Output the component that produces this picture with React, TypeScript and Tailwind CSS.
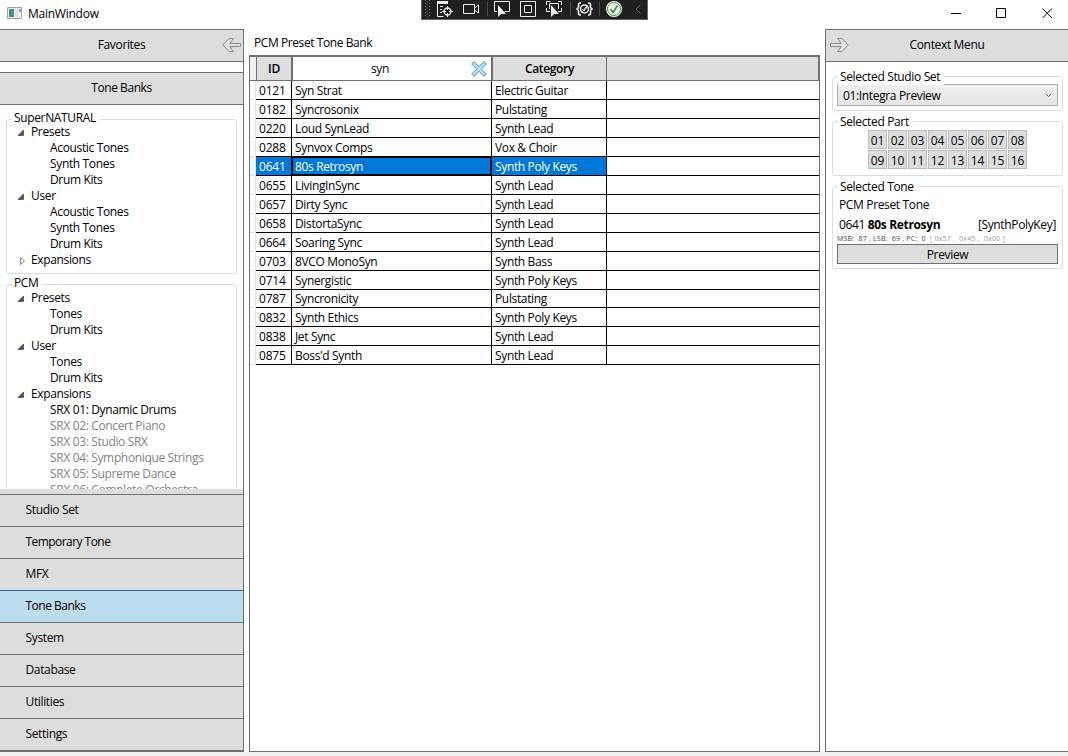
import React from "react";

const tx = "whitespace-pre leading-4";

function ArrowIcon({ flip }: { flip?: boolean }) {
  return (
    <svg width="19" height="14" viewBox="0 0 19 14" className={flip ? "-scale-x-100" : ""} fill="#e2e2e2" stroke="#8a8a8a" strokeWidth="1">
      <path d="M.7 7 7 .6h4.300L7.800 5.500h10.700v3H7.800l3.500 4.900H7z" />
    </svg>
  );
}

function GroupBox({ title, className, low, children }: { title: string; className: string; low?: boolean; children: React.ReactNode }) {
  return (
    <div className={"relative rounded-[3px] border border-[#d5dfe5] " + className}>
      <div className={"absolute left-[5px] bg-white pl-0.5 pr-1 " + tx + (low ? " -top-[8px]" : " -top-[10px]")}>{title}</div>
      {children}
    </div>
  );
}

function Branch({ title, closed }: { title: string; closed?: boolean }) {
  return (
    <div className="flex h-4 items-center">
      <svg width="10" height="10" viewBox="0 0 10 10" className="ml-[10px] mr-[4px] mt-px shrink-0">
        {closed ? <path d="M3.500 1.500v7L7.500 5z" fill="#fff" stroke="#8a8a8a" /> : <path d="M6.500 2v5.500H1z" fill="#595959" stroke="#404040" strokeWidth=".7" />}
      </svg>
      <span className={tx}>{title}</span>
    </div>
  );
}

function Leaf({ title, dim }: { title: string; dim?: boolean }) {
  return <div className={"h-4 pl-[43px] " + tx + (dim ? " text-[#838383]" : "")}>{title}</div>;
}

const rows = [
  ["0121", "Syn Strat", "Electric Guitar"],
  ["0182", "Syncrosonix", "Pulstating"],
  ["0220", "Loud SynLead", "Synth Lead"],
  ["0288", "Synvox Comps", "Vox & Choir"],
  ["0641", "80s Retrosyn", "Synth Poly Keys"],
  ["0655", "LivingInSync", "Synth Lead"],
  ["0657", "Dirty Sync", "Synth Lead"],
  ["0658", "DistortaSync", "Synth Lead"],
  ["0664", "Soaring Sync", "Synth Lead"],
  ["0703", "8VCO MonoSyn", "Synth Bass"],
  ["0714", "Synergistic", "Synth Poly Keys"],
  ["0787", "Syncronicity", "Pulstating"],
  ["0832", "Synth Ethics", "Synth Poly Keys"],
  ["0838", "Jet Sync", "Synth Lead"],
  ["0875", "Boss'd Synth", "Synth Lead"],
];

const menu = ["Studio Set", "Temporary Tone", "MFX", "Tone Banks", "System", "Database", "Utilities", "Settings"];
const parts = ["01", "02", "03", "04", "05", "06", "07", "08", "09", "10", "11", "12", "13", "14", "15", "16"];

function DebugBar() {
  return (
    <svg width="227" height="20" viewBox="0 0 227 20" className="absolute left-[421px] top-0" fill="none" stroke="#f0f0f0">
      <path d="M0 0h227v20H0z" fill="#1f1f1f" stroke="none" />
      <path d="M.5 0v19.500h226V0" stroke="#666" />
      <path d="M4.500 0v17M8.500 0v17" stroke="#777" strokeDasharray="1 2" />
      <path d="M6.500 1.500v16" stroke="#777" strokeDasharray="1 2" />
      <path d="M16.500 1v15.500h6M19 6.500h3M19 9.500h2M19 12.500h2" />
      <path d="M16 1h11v3H16z" fill="#f0f0f0" stroke="none" />
      <circle cx="26.500" cy="11.500" r="3.500" strokeWidth="1.300" />
      <path d="M26.500 6v4M26.500 13v4M21 11.500h4M28 11.500h4" />
      <path d="M42.500 4.500h11v9h-11zM53.500 8l4-3v8l-4-3" />
      <path d="M66.500 2v14M149.500 2v14M178.500 2v14" stroke="#4a4a4a" />
      <path d="M76 11.500h-2.500v-10h15v10h-5" />
      <path d="M77 5v12l3-3h5z" fill="#f0f0f0" stroke="none" />
      <path d="M99.500 1.500h15v15h-15zM103.500 5.500h7v7h-7z" />
      <path d="M125.500 5V1.500h4M137 1.500h3.500V5M140.500 8v3.500H137M129 11.500h-3.500V8M128.500 9V3.500h9V9" />
      <path d="M130 5v12l3-3h5z" fill="#f0f0f0" stroke="none" />
      <path d="M160 3h-1q-1.500 0-1.500 2v2.500L156 9l1.500 1.500V13q0 2 1.500 2h1M167 3h1q1.500 0 1.500 2v2.500L171 9l-1.500 1.500V13q0 2-1.500 2h-1" strokeWidth="1.600" />
      <circle cx="163.500" cy="9" r="4" strokeWidth="1.500" />
      <path d="m161.500 9 1.500 2 3-4M160.500 13l6-8" />
      <circle cx="193" cy="9" r="8" fill="#f5f5f5" stroke="none" />
      <circle cx="193" cy="9" r="6.500" stroke="#379b37" />
      <path d="m189.500 9 2.500 3.500 4.500-7" stroke="#379b37" strokeWidth="1.800" />
      <path d="m219.500 4.500-4.500 4.500 4.500 4.500" stroke="#666" />
    </svg>
  );
}

export default function App() {
  return (
    <div className="relative flex h-[756px] w-[1068px] flex-col overflow-hidden bg-white font-['Open_Sans','Noto_Sans',sans-serif] text-[12px] tracking-[-0.35px] text-black">
      <header className="flex h-[29px] shrink-0 items-center">
        <svg width="15" height="12" viewBox="0 0 15 12" className="mb-[3px] ml-[7px] mr-[6px]">
          <path d="M.5.500h14v11H.5z" fill="#eee" stroke="#9da5ab" />
          <path d="M2 2h5v8H2z" fill="#4a8f88" />
          <path d="M8 2h3v8H8z" fill="#ddd" />
          <path d="M12 2h2v3h-2z" fill="#69a6d8" />
        </svg>
        <span className={"grow -mt-px tracking-[-0.25px] " + tx}>MainWindow</span>
        <svg width="110" height="12" viewBox="0 0 110 12" className="mb-[3px] mr-[9px]" fill="none" stroke="#000">
          <path d="M2 6.500h10M47.500 1.500h9v9h-9zM93.500 1.500l9.500 9.500M103 1.500l-9.500 9.500" />
        </svg>
      </header>
      <DebugBar />
      <div className="flex h-[723px] shrink-0">
        <aside className="flex w-[244px] shrink-0 flex-col border-r border-t border-[#707070]">
          <div className="relative flex h-8 shrink-0 items-center justify-center border-b border-[#707070] bg-[#ddd] pb-px">
            <span className={tx}>Favorites</span>
            <div className="absolute right-[2px] top-[8px]"><ArrowIcon /></div>
          </div>
          <div className="mt-[10px] flex h-[33px] shrink-0 items-center justify-center border-y border-[#707070] bg-[#ddd] pb-[2px]">
            <span className={"tracking-[-0.45px] " + tx}>Tone Banks</span>
          </div>
          <div className="h-[384px] shrink-0 overflow-hidden pl-[6px] pr-[6px] pt-[14px]">
            <GroupBox title="SuperNATURAL" className="h-[155px] pt-1">
              <Branch title="Presets" />
              <Leaf title="Acoustic Tones" />
              <Leaf title="Synth Tones" />
              <Leaf title="Drum Kits" />
              <Branch title="User" />
              <Leaf title="Acoustic Tones" />
              <Leaf title="Synth Tones" />
              <Leaf title="Drum Kits" />
              <Branch title="Expansions" closed />
            </GroupBox>
            <GroupBox title="PCM" className="mt-[10px] h-[300px] pt-[5px]">
              <Branch title="Presets" />
              <Leaf title="Tones" />
              <Leaf title="Drum Kits" />
              <Branch title="User" />
              <Leaf title="Tones" />
              <Leaf title="Drum Kits" />
              <Branch title="Expansions" />
              <Leaf title="SRX 01: Dynamic Drums" />
              <Leaf title="SRX 02: Concert Piano" dim />
              <Leaf title="SRX 03: Studio SRX" dim />
              <Leaf title="SRX 04: Symphonique Strings" dim />
              <Leaf title="SRX 05: Supreme Dance" dim />
              <Leaf title="SRX 06: Complete Orchestra" dim />
            </GroupBox>
          </div>
          <nav className="flex grow flex-col border-b border-[#707070] bg-[#ddd] pt-[5px]">
            {menu.map((m) => (
              <div key={m} className={"flex h-8 items-center border-t pb-[2px] pl-[25.500px] " + (m === "Tone Banks" ? "border-[#2c628b] bg-[#bbddee] tracking-[-0.5px]" : m === "Temporary Tone" ? "border-[#707070] tracking-[-0.55px]" : "border-[#707070]")}>
                <span className={tx}>{m}</span>
              </div>
            ))}
            <div className="h-px bg-[#707070]" />
          </nav>
        </aside>
        <main className="ml-[5px] flex w-[571px] shrink-0 flex-col">
          <div className={"h-[26px] pl-[5px] pt-[6px] tracking-[-0.42px] " + tx}>PCM Preset Tone Bank</div>
          <div className="flex grow flex-col border border-t-2 border-[#707070]">
            <div className="flex h-6 shrink-0 border-b border-[#707070] bg-[#ddd] font-semibold">
              <div className="w-[7px] border-r border-[#707070] bg-[#f0f0f0]" />
              <div className="flex w-[34px] items-center justify-center">ID</div>
              <div className="relative flex w-[202px] items-center justify-center border-x-2 border-[#707070] bg-white pr-[24px] font-normal">
                syn
                <svg width="16" height="16" viewBox="0 0 16 16" className="absolute right-[4px] top-[4px]">
                  <path d="m1.500 1.500 13 13M14.500 1.500l-13 13" stroke="#6ba3d6" strokeWidth="4" />
                  <path d="m2.200 2.200 11.600 11.600M13.800 2.200 2.200 13.800" stroke="#bde3f8" strokeWidth="2.200" />
                </svg>
              </div>
              <div className="flex w-[114px] items-center justify-center border-r border-[#707070]">Category</div>
              <div className="grow border-r border-[#707070]" />
            </div>
            {rows.map(([id, name, cat], i) => {
              const sel = id === "0641";
              return (
                <div key={id} className={"flex shrink-0 leading-4 " + (i === 11 ? "h-[18px]" : "h-[19px]")}>
                  <div className={"w-[6px] border-b border-r border-[#e3e3e3] " + (sel ? "bg-[#e8f6fd]" : "bg-[#fafafa]")} />
                  <div className="flex grow border-b border-black">
                    <div className={"w-[36px] border-r border-black pl-[3px] tracking-[-0.2px] " + (i === 11 ? "pt-px " : "pt-[2px] ") + (sel ? "bg-[#0078d7] text-white" : "")}>{id}</div>
                    <div className={"w-[200px] border-r border-black pl-[3px] " + (i === 11 ? "pt-px " : "pt-[2px] ") + (sel ? "bg-[#0078d7] text-white shadow-[inset_0_0_0_1px_black]" : "")}>{name}</div>
                    <div className={"w-[115px] border-r border-black pl-[3px] " + (i === 11 ? "pt-px " : "pt-[2px] ") + (sel ? "bg-[#0078d7] text-white" : "")}>{cat}</div>
                  </div>
                </div>
              );
            })}
          </div>
        </main>
        <aside className="ml-[5px] flex grow flex-col border border-r-0 border-[#707070]">
          <div className="relative flex h-8 shrink-0 items-center justify-center border-b border-[#707070] bg-[#ddd] pb-px">
            <span className={tx}>Context Menu</span>
            <div className="absolute left-[4px] top-[8px]"><ArrowIcon flip /></div>
          </div>
          <div className="flex flex-col pl-[6px] pr-[5px] pt-[14px]">
            <GroupBox low title="Selected Studio Set" className="h-[35px] px-1 pt-[7px]">
              <div className="flex h-[22px] items-center justify-between border border-[#acacac] bg-linear-to-b from-[#f0f0f0] to-[#e5e5e5] pl-[5px] pr-[5px]">
                <span className={"pt-[2px] " + tx}>01:Integra Preview</span>
                <svg width="7" height="5" viewBox="0 0 7 5" fill="none" stroke="#606060"><path d="m1 1 2.500 2.500L6 1" /></svg>
              </div>
            </GroupBox>
            <GroupBox low title="Selected Part" className="mt-[10px] h-[55px] pt-[8px]">
              <div className="ml-[35px] grid w-[160px] grid-cols-[repeat(8,20px)] gap-y-px">
                {parts.map((p) => (
                  <div key={p} className="h-[19px] w-[19px] border border-[#bcbcbc] bg-[#ddd] pt-[2px] text-center leading-4 tracking-[-0.1px]">{p}</div>
                ))}
              </div>
            </GroupBox>
            <GroupBox low title="Selected Tone" className="mt-[10px] h-[83px] px-1 pt-[10px]">
              <div className={"pl-[2px] " + tx}>PCM Preset Tone</div>
              <div className="mt-[4px] flex justify-between pl-[2px] pr-[2px]">
                <span className={tx}>0641 <b>80s Retrosyn</b></span>
                <span className={tx}>[SynthPolyKey]</span>
              </div>
              <div className="h-[11px] whitespace-pre text-[7px] leading-[12px] tracking-[0.22px] text-[#444]">MSB:  87 , LSB:  69 , PC:  0  <span className="text-[#9a9aa5]">[ 0x57 ,  0x45 ,  0x00 ]</span></div>
              <div className="h-5 border border-[#707070] bg-[#ddd] pt-[2px] text-center leading-4">Preview</div>
            </GroupBox>
          </div>
        </aside>
      </div>
      <div className="grow bg-[#f0f0f0]" />
    </div>
  );
}
